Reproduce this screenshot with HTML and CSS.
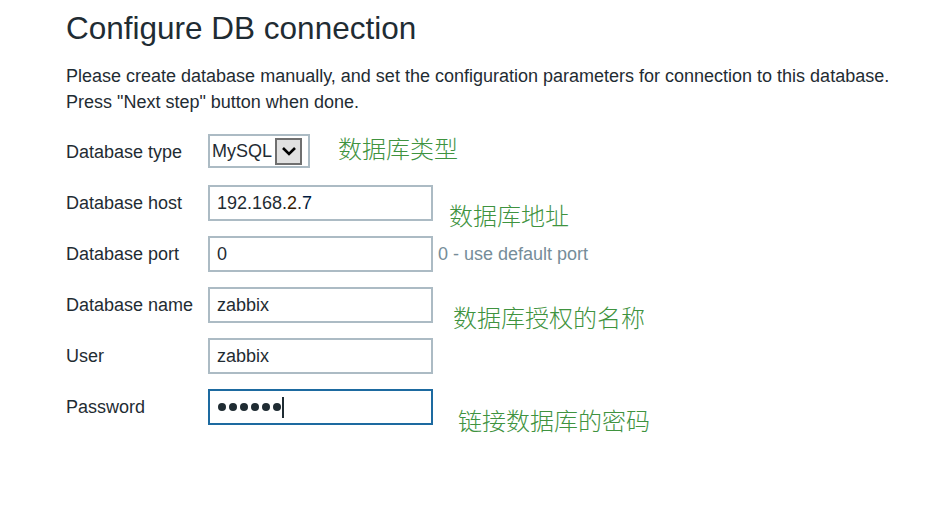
FILE: index.html
```html
<!DOCTYPE html>
<html>
<head>
<meta charset="utf-8">
<link rel="stylesheet" href="styles.css">
</head>
<body>
<div class="page">
  <h1 class="title">Configure DB connection</h1>
  <p class="intro">Please create database manually, and set the configuration parameters for connection to this database.<br>Press "Next step" button when done.</p>
  <div class="form">
    <div class="row">
      <div class="label">Database type</div>
      <div class="field">
        <div class="select"><span class="select-text">MySQL</span><span class="select-btn"><svg width="16" height="10" viewBox="0 0 16 10"><path d="M2 2 L8 8 L14 2" fill="none" stroke="#000" stroke-width="2.6"/></svg></span></div>
      </div>
    </div>
    <div class="row">
      <div class="label">Database host</div>
      <div class="field"><div class="input">192.168.<span class="hl1">2</span>.<span class="hl2">7</span></div></div>
    </div>
    <div class="row">
      <div class="label">Database port</div>
      <div class="field"><div class="input">0</div><span class="hint">0 - use default port</span></div>
    </div>
    <div class="row">
      <div class="label">Database name</div>
      <div class="field"><div class="input">zabbix</div></div>
    </div>
    <div class="row">
      <div class="label">User</div>
      <div class="field"><div class="input">zabbix</div></div>
    </div>
    <div class="row">
      <div class="label">Password</div>
      <div class="field"><div class="input focused"><span class="dots"><i></i><i></i><i></i><i></i><i></i><i></i></span><span class="caret"></span></div></div>
    </div>
  </div>
  <div class="note note-type">数据库类型</div>
  <div class="note note-host">数据库地址</div>
  <div class="note note-name">数据库授权的名称</div>
  <div class="note note-pass">链接数据库的密码</div>
</div>
</body>
</html>
```
FILE: styles.css
```css
html, body {
  margin: 0;
  padding: 0;
  background: #fff;
}
body {
  font-family: "Liberation Sans", Arial, sans-serif;
  color: #1f2c33;
  width: 937px;
  height: 519px;
  overflow: hidden;
}
.page {
  position: relative;
  padding: 10px 0 0 66px;
}
.title {
  margin: 0;
  font-size: 31.5px;
  font-weight: normal;
  line-height: 36px;
}
.intro {
  margin: 17px 0 0;
  font-size: 18px;
  line-height: 26px;
}
.form {
  margin-top: 19px;
  display: flex;
  flex-direction: column;
  gap: 15px;
}
.row {
  display: flex;
  align-items: center;
  height: 36px;
}
.label {
  width: 142px;
  font-size: 18px;
}
.field {
  display: flex;
  align-items: center;
}
.input {
  box-sizing: border-box;
  width: 225px;
  height: 36px;
  border: 2px solid #acbbc4;
  padding: 0 7px;
  font-size: 18px;
  display: flex;
  align-items: center;
}
.input.focused {
  border-color: #1d6aa0;
}
.hl1 { color: #3b2000; }
.hl2 { color: #001a40; }
.dots {
  display: flex;
  gap: 3px;
  margin-left: 1px;
}
.dots i {
  display: block;
  width: 8px;
  height: 8px;
  border-radius: 50%;
  background: #1f2c33;
}
.caret {
  display: inline-block;
  width: 2px;
  height: 21px;
  background: #1f2c33;
  margin-left: 1px;
}
.hint {
  margin-left: 5px;
  font-size: 18px;
  color: #768d99;
}
.select {
  box-sizing: border-box;
  height: 34px;
  width: 102px;
  margin-bottom: 2px;
  border: 2px solid #acbbc4;
  display: flex;
  align-items: center;
  padding: 0 0 0 2px;
  font-size: 18px;
  gap: 3px;
}
.select-btn {
  box-sizing: border-box;
  width: 27px;
  height: 27px;
  background: #e1e1e1;
  border: 2px solid #6f6f6f;
  display: flex;
  align-items: center;
  justify-content: center;
}
.note {
  position: absolute;
  font-family: "Noto Sans CJK SC", sans-serif;
  font-weight: 300;
  font-size: 24px;
  line-height: 30px;
  color: #3f933f;
}
.note-type { left: 338px; top: 133px; }
.note-host { left: 449px; top: 200px; }
.note-name { left: 453px; top: 302px; }
.note-pass { left: 458px; top: 405px; }
```
